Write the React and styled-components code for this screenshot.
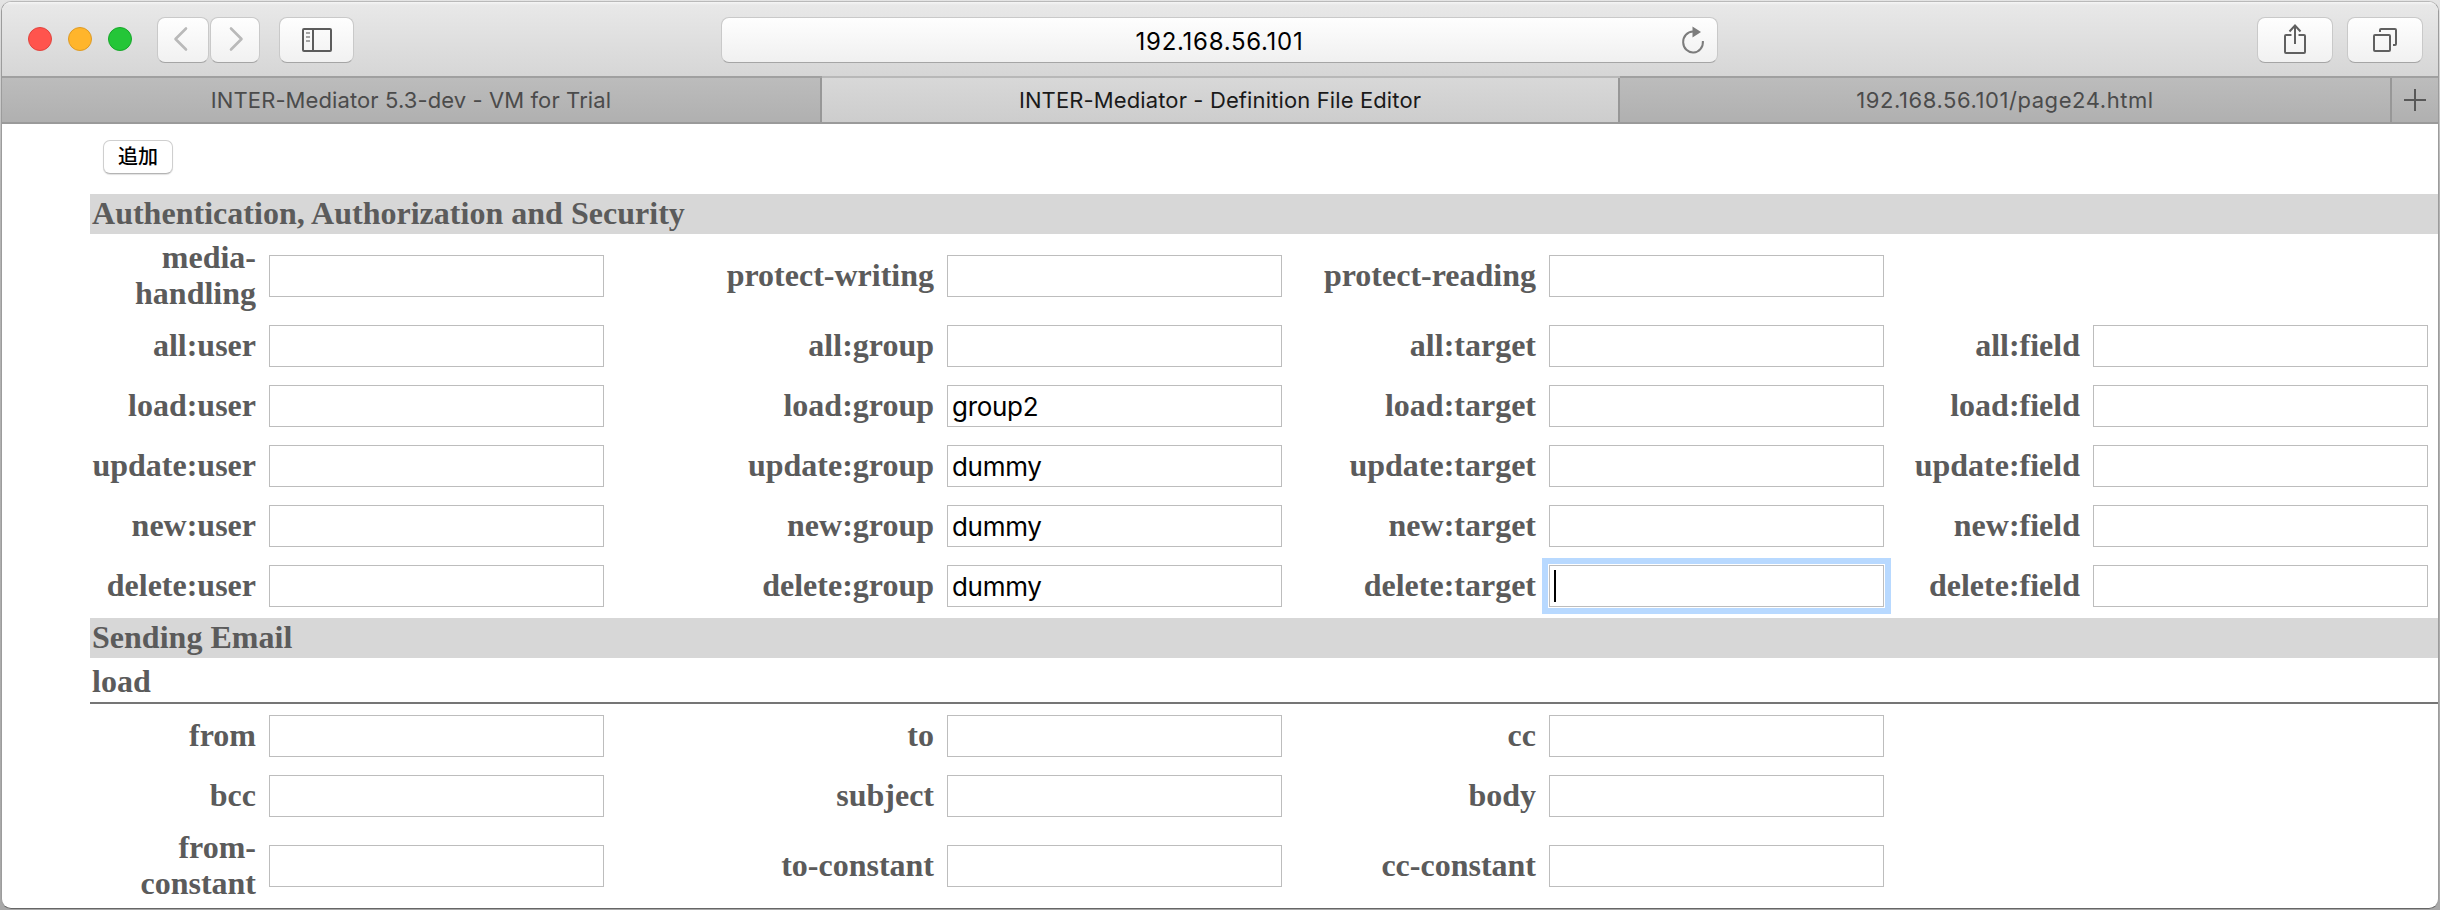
import React from 'react';
import styled, { createGlobalStyle, css } from 'styled-components';

const GlobalStyle = createGlobalStyle`
  * { box-sizing: border-box; }
  body { margin: 0; background: #c4c4c4; overflow: hidden; }
`;

const ui = css`font-family: Inter, "Liberation Sans", sans-serif;`;

const Desktop = styled.div`
  height: 910px;
  padding: 1px;
  background: linear-gradient(#e4e4e4, #b4b4b4 20%, #a8a8a8);
`;
const Window = styled.div`
  height: 908px;
  width: 2438px;
  display: flex;
  flex-direction: column;
  border: 1px solid #9c9c9c;
  border-top-color: #b9b9b9;
  border-bottom-color: #666;
  border-radius: 10px;
  background: #fff;
  overflow: hidden;
`;
const Toolbar = styled.header`
  flex: none;
  height: 76px;
  padding: 15px 15px 0 26px;
  display: flex;
  align-items: flex-start;
  background: linear-gradient(#f6f6f6 0, #e8e8e8 3px, #d6d6d6 100%);
  border-bottom: 2px solid #a0a0a0;
`;
const Lights = styled.div`
  display: flex;
  gap: 16px;
  padding-top: 10px;
  margin-right: 25px;
`;
const Light = styled.span`
  width: 24px;
  height: 24px;
  border-radius: 50%;
  background: ${p => p.$fill};
  border: 1px solid ${p => p.$edge};
`;
const ToolButton = styled.button`
  width: ${p => p.$width}px;
  height: 46px;
  margin-right: ${p => p.$after || 0}px;
  padding: 0 0 ${p => p.$lift || 0}px;
  display: flex;
  align-items: center;
  justify-content: center;
  border: 1px solid #c9c9c9;
  border-bottom-color: #a5a5a5;
  border-radius: 8px;
  background: linear-gradient(#fefefe, #f1f1f1);
`;
const AddressBar = styled.div`
  ${ui}
  width: 997px;
  height: 46px;
  margin: 0 auto 0 367px;
  display: grid;
  grid-template-columns: 48px 1fr 48px;
  align-items: center;
  justify-items: center;
  border: 1px solid #c9c9c9;
  border-bottom-color: #a5a5a5;
  border-radius: 8px;
  background: linear-gradient(#fefefe, #f0f0f0);
  font-size: 24px;
  color: #000;
`;
const Address = styled.span`
  grid-column: 2;
  padding-top: 2px;
  letter-spacing: 0.72px;
`;
const TabBar = styled.nav`
  ${ui}
  flex: none;
  height: 46px;
  display: flex;
  border-bottom: 2px solid #9a9a9a;
  background: linear-gradient(#bcbcbc, #b0b0b0);
`;
const Tab = styled.div`
  width: ${p => p.$width}px;
  display: flex;
  align-items: center;
  justify-content: center;
  border-right: 2px solid #979797;
  font-size: 22px;
  letter-spacing: ${p => p.$spacing || 0}px;
  white-space: pre;
  color: ${p => (p.$active ? '#1a1a1a' : '#4b4b4b')};
  background: ${p => (p.$active ? 'linear-gradient(#d8d8d8, #cdcdcd)' : 'none')};
  box-shadow: ${p => (p.$active ? '0 -2px 0 #b8b8b8' : 'none')};
`;
const NewTab = styled.div`
  flex: 1;
  display: flex;
  align-items: center;
  justify-content: center;
`;
const Page = styled.main`
  flex: 1;
  padding: 16px 0 0 88px;
  color: #5b5b5b;
  font: bold 32px/36px "Liberation Serif", serif;
`;
const AddButton = styled.button`
  display: block;
  width: 70px;
  height: 34px;
  margin: 0 0 20px 13px;
  padding: 0 0 2px;
  border: 1px solid #cfcfcf;
  border-bottom-color: #b4b4b4;
  border-radius: 7px;
  background: #fff;
  box-shadow: 0 1px 1px #e2e2e2;
  font: 500 20px/30px "Noto Sans CJK JP", sans-serif;
  color: #000;
`;
const SectionTitle = styled.h2`
  margin: 0;
  padding: 1px 2px 3px;
  background: #d7d7d7;
  font: inherit;
  letter-spacing: 0.02px;
`;
const SubTitle = styled.h3`
  margin: 0;
  height: 46px;
  padding: 5px 2px 3px;
  border-bottom: 2px solid #757575;
  font: inherit;
`;
const Rows = styled.div`
  padding-bottom: ${p => p.$after || 0}px;
`;
const Row = styled.div`
  display: grid;
  grid-template-columns: 514px 678px 602px 544px;
  align-items: center;
  height: ${p => (p.$tall ? 80 : 60)}px;
  padding-top: 4px;
`;
const Field = styled.label`
  display: flex;
  align-items: center;
  gap: 13px;
`;
const Name = styled.span`
  flex: 1;
  margin-bottom: 2px;
  text-align: right;
`;
const Box = styled.span`
  ${ui}
  width: 335px;
  height: 42px;
  padding: 2px 0 0 4px;
  display: flex;
  align-items: center;
  border: 1px solid #bdbdbd;
  background: #fff;
  color: #000;
  font-size: 26px;
  font-weight: 400;
  letter-spacing: -0.3px;
  ${p => p.$focused && css`
    padding: 0 0 0 4px;
    box-shadow: 0 0 0 1px #fff, 0 0 0 7px #b8d9ff;
  `}
`;
const Caret = styled.i`
  width: 2px;
  height: 32px;
  background: #000;
`;

const security = [
  ['media-handling', 'protect-writing', 'protect-reading'],
  ...['all', 'load', 'update', 'new', 'delete'].map(op =>
    ['user', 'group', 'target', 'field'].map(kind => `${op}:${kind}`)),
];
const mail = [
  ['from', 'to', 'cc'],
  ['bcc', 'subject', 'body'],
  ['from-constant', 'to-constant', 'cc-constant'],
];
const values = { 'load:group': 'group2', 'update:group': 'dummy', 'new:group': 'dummy', 'delete:group': 'dummy' };
const focused = 'delete:target';

const FieldRows = ({ rows, after }) => (
  <Rows $after={after}>
    {rows.map(row => (
      <Row key={row[0]} $tall={row[0].includes('-')}>
        {row.map(name => (
          <Field key={name}>
            <Name>{name}</Name>
            <Box $focused={name === focused}>
              {name === focused ? <Caret /> : values[name]}
            </Box>
          </Field>
        ))}
      </Row>
    ))}
  </Rows>
);

const Chevron = ({ d }) => (
  <svg width="20" height="26" viewBox="0 0 20 26" fill="none" stroke="#b9b9b9" strokeWidth="2.6" strokeLinecap="round" strokeLinejoin="round">
    <path d={d} />
  </svg>
);

export default function App() {
  return (
    <Desktop>
      <GlobalStyle />
      <Window>
        <Toolbar>
          <Lights>
            <Light $fill="#ff544d" $edge="#e0443e" />
            <Light $fill="#ffb52b" $edge="#dd9a25" />
            <Light $fill="#24c638" $edge="#17a72a" />
          </Lights>
          <ToolButton $width={52} $after={1} $lift={2}><Chevron d="M13 2.5 L2.5 13 L13 23.5" /></ToolButton>
          <ToolButton $width={50} $after={19} $lift={2}><Chevron d="M6 2.5 L16.5 13 L6 23.5" /></ToolButton>
          <ToolButton $width={75}>
            <svg width="30" height="24" viewBox="0 0 30 24" fill="none" stroke="#5c5c5c" strokeWidth="2">
              <rect x="1" y="1" width="28" height="22" rx="1" />
              <path d="M11 1V23" />
              <path d="M4 5H8M4 9H8M4 13H8" stroke="#8a8a8a" strokeWidth="1.6" />
            </svg>
          </ToolButton>
          <AddressBar>
            <Address>192.168.56.101</Address>
            <svg width="24" height="28" viewBox="0 0 24 28">
              <path d="M12 5.5 A9.9 10.5 0 1 0 21.9 15" fill="none" stroke="#7c7c7c" strokeWidth="2" />
              <path d="M11.5 0.5 L20 6 L11.5 11.5Z" fill="#7c7c7c" />
            </svg>
          </AddressBar>
          <ToolButton $width={76} $after={14} $lift={2}>
            <svg width="22" height="30" viewBox="0 0 22 30" fill="none" stroke="#606060" strokeWidth="2">
              <path d="M7.5 11H2Q1 11 1 12V28Q1 29 2 29H20Q21 29 21 28V12Q21 11 20 11H14.5M11 20V2M5.5 7.5L11 1.5L16.5 7.5" />
            </svg>
          </ToolButton>
          <ToolButton $width={76}>
            <svg width="24" height="24" viewBox="0 0 24 24" fill="none" stroke="#606060" strokeWidth="2">
              <rect x="1" y="7" width="16" height="16" rx="1" />
              <path d="M7 4V2Q7 1 8 1H22Q23 1 23 2V16Q23 17 22 17H20" />
            </svg>
          </ToolButton>
        </Toolbar>
        <TabBar>
          <Tab $width={820} $spacing={0.1}>INTER-Mediator 5.3-dev - VM for Trial</Tab>
          <Tab $width={798} $spacing={0.12} $active>INTER-Mediator - Definition File Editor</Tab>
          <Tab $width={772} $spacing={0.57}>192.168.56.101/page24.html</Tab>
          <NewTab>
            <svg width="22" height="22" viewBox="0 0 22 22" stroke="#585858" strokeWidth="2">
              <path d="M11 0V22M0 11H22" />
            </svg>
          </NewTab>
        </TabBar>
        <Page>
          <AddButton>追加</AddButton>
          <SectionTitle>Authentication, Authorization and Security</SectionTitle>
          <FieldRows rows={security} after={4} />
          <SectionTitle>Sending Email</SectionTitle>
          <SubTitle>load</SubTitle>
          <FieldRows rows={mail} />
        </Page>
      </Window>
    </Desktop>
  );
}
